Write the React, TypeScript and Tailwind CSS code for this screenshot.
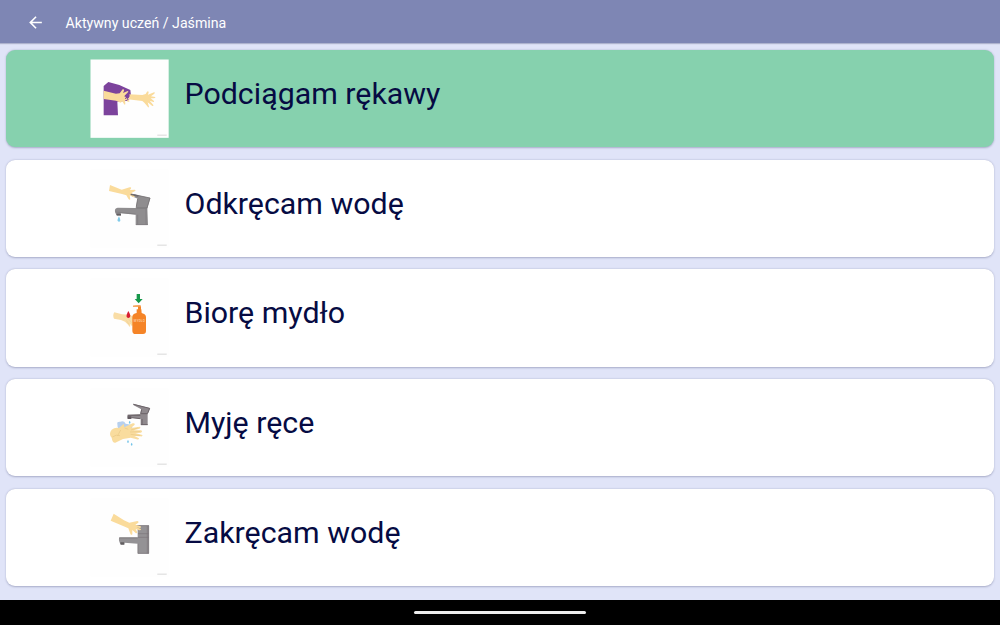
import type { ReactNode } from "react";

function SleevesArt() {
  return (
    <>
      <path d="M56 93 L70 81 L103 90 L136 105 L138 122 L122 138 L97 140 L99 181 L56 181 Z" fill="#7c439c" />
      <path d="M56 107 L93 116 L104 115 L113 103 Q118 102 117 107 L114 114 L128 108 Q132 110 129 113 L119 122 L122 127 L133 137 Q134 142 129 140 L120 135 L121 147 Q120 151 117 147 L112 139 L107 143 L93 137 L56 132 Z" fill="#fadb9b" />
      <path d="M119 124 L131 111 M120 131 L136 121 M123 137 L135 130" stroke="#7c439c" strokeWidth="3" />
      <path d="M133 118 L172 120 L182 117 L186 110 Q190 107 191 112 L189 119 L207 112 Q212 112 208 116 L198 124 L211 126 Q212 130 206 130 L197 130 L207 138 Q208 142 203 140 L194 137 L205 150 Q206 154 201 152 L188 142 L192 155 Q190 160 187 154 L178 143 L172 138 L128 133 Q136 126 133 118 Z" fill="#fadb9b" />
    </>
  );
}

function TapOnArt() {
  return (
    <>
      <path d="M138 86 L196 99 L187 129 L189 180 L152 180 L152 149 L107 145 L107 150 L94 150 L90 141 Q88 129 98 128 L152 129 L158 101 L138 92 Z" fill="#8f8d8f" />
      <path d="M138 87 L195 99 L186 129 M154 129 L187 129 M158 101 L154 125" fill="none" stroke="#757174" strokeWidth="2.5" />
      <path d="M92 141 L152 147 M153 179 L188 179 M158 149 L158 178 M183 132 L183 178" fill="none" stroke="#7c797c" strokeWidth="2" />
      <path d="M95 146 H108 V152 H95 Z" fill="#625e61" />
      <path d="M75 60 L110 74 L134 67 Q140 66 138 71 L134 75 L150 74 Q154 77 149 79 L139 84 L149 93 Q149 98 144 96 L134 91 L136 103 Q133 106 130 101 L124 91 L111 87 L72 78 Z" fill="#fadb9b" />
      <path d="M137 88 L160 93" stroke="#6d696c" strokeWidth="4" />
      <path d="M102 154 Q96 165 98 168 Q102 173 106 168 Q107 164 102 154Z" fill="#80cbea" />
    </>
  );
}

function SoapArt() {
  return (
    <>
      <path d="M155 60 H165 V75 H173 L161 88 L149 75 H155 Z" fill="#16984a" />
      <path d="M88 115 L111 121 L135 122 L144 128 L145 151 L141 157 L135 149 L136 157 Q133 160 130 153 L120 143 L108 138 L87 134 Q82 124 88 115 Z" fill="#f9dda6" />
      <path d="M129 133 L140 146 M124 139 L132 151" stroke="#edcb8e" strokeWidth="1.5" />
      <path d="M130 111 Q123 123 125 129 Q130 135 135 129 Q138 124 130 111Z" fill="#d81e31" />
      <path d="M144 96 Q152 93 166 94 L168 98 V106 L169 106 L170 117 Q183 120 183 129 V171 Q183 180 174 180 H152 Q142 180 142 170 V128 Q143 119 155 117 L155 106 H159 V98 H144 Z" fill="#f58427" />
      <path d="M144 96 H167" stroke="#f4ae6c" strokeWidth="3" />
      <text x="163" y="145" textAnchor="middle" fontSize="9" fontWeight="700" fill="#f9c79b" textLength="33">MYDŁO</text>
    </>
  );
}

function WashArt() {
  return (
    <>
      <path d="M145 59 L195 73 L188 89 V123 H167 V104 L139 101 V104 H128 V92 L166 90 L169 76 L146 64 Z" fill="#8f898d" />
      <path d="M145 61 L194 73 L188 88 M170 76 L167 89 L188 89 M128 94 H166 M139 101 L166 104 M168 122 H188 M171 105 V121" fill="none" stroke="#6b6368" strokeWidth="3" />
      <path d="M127 97 H139 V105 H128 Z" fill="#625a60" />
      <path d="M97 120 Q95 112 106 113 Q117 109 122 119 L139 122 L143 134 L115 142 Q96 137 97 120Z" fill="#b7d0ee" />
      <path d="M80 137 Q90 129 102 132 L116 119 L118 130 L143 118 Q151 116 149 122 L138 132 L164 128 Q169 130 163 134 L146 139 L168 139 Q174 142 168 146 L151 147 L172 153 Q174 158 167 157 L148 156 L162 163 Q162 168 155 166 L137 161 L114 165 L91 176 Q82 177 80 161 Q70 150 80 137Z" fill="#f9dc9e" />
      <path d="M82 159 Q94 150 105 155 M119 132 L130 136 M135 144 L165 143 M137 151 L166 155 M138 138 L158 132 M98 155 L107 138" fill="none" stroke="#e3c17c" strokeWidth="1.5" />
      <path d="M134 110 Q129 117 134 119 Q139 116 134 110 M129 168 Q124 175 129 177 Q134 174 129 168 M140 176 Q135 183 140 185 Q145 182 140 176" fill="#73c4e9" />
    </>
  );
}

function TapOffArt() {
  return (
    <>
      <path d="M153 94 H192 V179 H158 V149 L118 146 V151 H106 L102 140 Q101 130 105 130 L158 130 V105 L153 100 Z" fill="#949295" />
      <path d="M154 95 H191 V178 H159 V149 M159 119 H191 M159 130 H191 M187 96 V178 M102 132 H158" fill="none" stroke="#7b767a" strokeWidth="2" />
      <path d="M106 145 H118 V152 H107 Z" fill="#625e61" />
      <path d="M86 59 L117 79 L133 86 L157 81 Q162 81 160 86 L151 92 L167 97 Q170 102 164 102 L154 100 L168 105 Q168 110 161 108 L152 105 L157 115 Q155 120 151 116 L142 108 L142 121 Q139 125 136 119 L130 103 L116 97 L77 80 Z" fill="#fadb9b" />
    </>
  );
}

interface Step {
  label: string;
  art: ReactNode;
  done?: boolean;
}

const steps: Step[] = [
  { label: "Podciągam rękawy", art: <SleevesArt />, done: true },
  { label: "Odkręcam wodę", art: <TapOnArt /> },
  { label: "Biorę mydło", art: <SoapArt /> },
  { label: "Myję ręce", art: <WashArt /> },
  { label: "Zakręcam wodę", art: <TapOffArt /> },
];

function StepCard({ label, art, done }: Step) {
  return (
    <li
      className={`flex h-[97.25px] shrink-0 items-start rounded-[9px] pt-[9px] pl-[84px] shadow-[0_0.5px_2px_rgba(60,65,110,0.35)] ${
        done ? "bg-[#86d1ae]" : "bg-white"
      }`}
    >
      <svg viewBox="15 12 237 237" className="size-[79px] shrink-0" aria-hidden="true">
        <rect x="16.5" y="13.5" width="234.5" height="235" fill="#fefefe" />
        {art}
        <path d="M217 240.5 H245" stroke="#cfcfcf" strokeWidth="2.5" />
      </svg>
      <span className="mt-[15px] ml-[15.5px] text-[30.35px] leading-10 whitespace-nowrap text-[#060b43]">{label}</span>
    </li>
  );
}

export default function App() {
  return (
    <div className="flex h-[625px] w-[1000px] flex-col overflow-hidden bg-[#e0e4f8] font-[Roboto,sans-serif]">
      <header className="flex h-[43px] shrink-0 items-center bg-[#7e86b4] pt-0.5 pl-[26px] text-white shadow-[0_1px_1px_rgba(60,65,110,0.3)]">
        <svg viewBox="0 0 24 24" className="size-[19px]" fill="currentColor" aria-hidden="true">
          <path d="M20 11H7.830l5.590-5.590L12 4l-8 8 8 8 1.410-1.410L7.830 13H20v-2z" />
        </svg>
        <h1 className="ml-[20.5px] text-[14.15px] leading-5">Aktywny uczeń / Jaśmina</h1>
      </header>
      <ul className="flex flex-1 flex-col gap-[12.5px] px-1.5 pt-[6.9px]">
        {steps.map((step) => (
          <StepCard key={step.label} {...step} />
        ))}
      </ul>
      <footer className="flex h-[25px] shrink-0 items-center justify-center bg-black">
        <div className="h-[3px] w-[172px] rounded-full bg-[#ededed]" />
      </footer>
    </div>
  );
}
